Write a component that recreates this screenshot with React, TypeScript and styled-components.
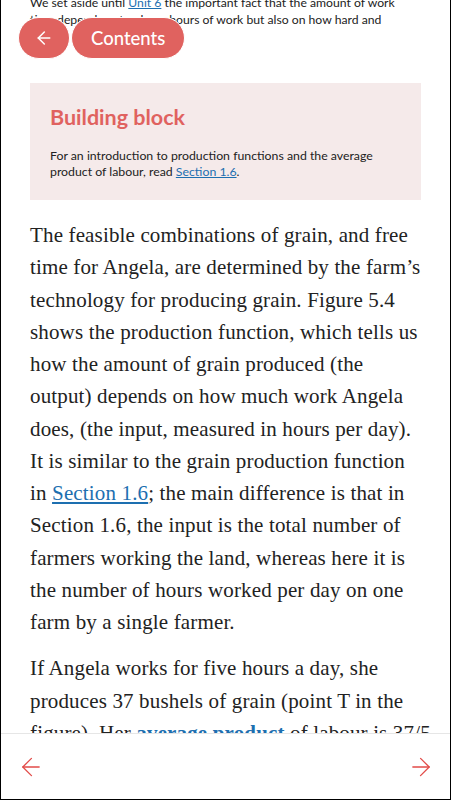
import React from 'react';
import styled, { createGlobalStyle } from 'styled-components';

const red = '#e0625f';
const linkBlue = '#1d6fb0';
const ink = '#222222';

const GlobalStyle = createGlobalStyle`
  html, body {
    margin: 0;
    padding: 0;
    background: #ffffff;
  }
  * {
    box-sizing: border-box;
  }
`;

const Frame = styled.div`
  position: relative;
  width: 451px;
  height: 800px;
  border: 1px solid #000;
  border-top: none;
  display: flex;
  flex-direction: column;
  overflow: hidden;
  background: #fff;
`;

const Scroller = styled.main`
  flex: 1;
  overflow: hidden;
`;

// the page is scrolled a little way down
const Content = styled.div`
  margin-top: -6px;
  padding: 0 29px;
`;

const Line = styled.span`
  display: block;
  white-space: nowrap;
`;

const Intro = styled.p`
  margin: 0 0 55px;
  font-family: Lato, 'Liberation Sans', sans-serif;
  font-size: 12.2px;
  line-height: 17px;
  color: ${ink};
`;

const SansLink = styled.a`
  color: ${linkBlue};
  text-decoration: underline;
`;

const Callout = styled.aside`
  background: #f5eaea;
  padding: 20px 20px 20px;
  margin-bottom: 19px;
`;

const CalloutTitle = styled.h3`
  margin: 0 0 17px;
  font-family: Lato, 'Liberation Sans', sans-serif;
  font-weight: 700;
  font-size: 21.5px;
  line-height: 28px;
  color: ${red};
`;

const CalloutText = styled.p`
  margin: 0;
  font-family: Lato, 'Liberation Sans', sans-serif;
  font-size: 12.3px;
  line-height: 16px;
  color: ${ink};
`;

const Body = styled.p`
  margin: 0 0 14px;
  font-family: 'Liberation Serif', 'DejaVu Serif', serif;
  font-size: 21px;
  letter-spacing: 0.15px;
  line-height: 32.25px;
  color: ${ink};
`;

const SerifLink = styled.a<{ strong?: boolean }>`
  color: ${linkBlue};
  text-decoration: ${props => (props.strong ? 'none' : 'underline')};
  font-weight: ${props => (props.strong ? 700 : 'normal')};
`;

const FloatingNav = styled.nav`
  position: absolute;
  top: 17px;
  left: 17px;
  display: flex;
  gap: 1px;
`;

const PillButton = styled.button<{ round?: boolean }>`
  height: 42px;
  min-width: ${props => (props.round ? '52px' : 'auto')};
  padding: ${props => (props.round ? '0' : '0 19px')};
  border: 1px solid #fff;
  border-radius: 21px;
  background: ${red};
  color: #fff;
  font-family: Lato, 'Liberation Sans', sans-serif;
  font-size: 18.5px;
  font-weight: 500;
  display: flex;
  align-items: center;
  justify-content: center;
  cursor: pointer;
`;

const BottomBar = styled.footer`
  height: 66px;
  flex: none;
  border-top: 1px solid #e6e6e6;
  background: #fff;
  display: flex;
  align-items: center;
  justify-content: space-between;
  padding: 0 19px 0 20px;
`;

const ArrowButton = styled.button`
  border: none;
  background: none;
  padding: 0;
  width: 20px;
  height: 24px;
  display: flex;
  align-items: center;
  justify-content: center;
  cursor: pointer;
`;

const Arrow = ({ dir, color, size, width }: { dir: 'left' | 'right'; color: string; size: number; width: number }) => (
  <svg
    width={size}
    height={size}
    viewBox="0 0 20 22"
    fill="none"
    stroke={color}
    strokeWidth={width}
    strokeLinecap="round"
    strokeLinejoin="round"
    style={{ transform: dir === 'right' ? 'scaleX(-1)' : undefined }}
  >
    <path d="M19 11H1" />
    <path d="M10.5 1.5 1 11l9.5 9.5" />
  </svg>
);

export default function App() {
  return (
    <>
      <GlobalStyle />
      <Frame>
        <Scroller>
          <Content>
            <Intro>
              <Line>
                We set aside until <SansLink href="#">Unit 6</SansLink> the important fact that the amount of work
              </Line>
              <Line>time depends not only on hours of work but also on how hard and</Line>
            </Intro>
            <Callout>
              <CalloutTitle>Building block</CalloutTitle>
              <CalloutText>
                <Line>For an introduction to production functions and the average</Line>
                <Line>
                  product of labour, read <SansLink href="#">Section 1.6</SansLink>.
                </Line>
              </CalloutText>
            </Callout>
            <Body>
              <Line>The feasible combinations of grain, and free</Line>
              <Line>time for Angela, are determined by the farm’s</Line>
              <Line>technology for producing grain. Figure 5.4</Line>
              <Line>shows the production function, which tells us</Line>
              <Line>how the amount of grain produced (the</Line>
              <Line>output) depends on how much work Angela</Line>
              <Line>does, (the input, measured in hours per day).</Line>
              <Line>It is similar to the grain production function</Line>
              <Line>
                in <SerifLink href="#">Section 1.6</SerifLink>; the main difference is that in
              </Line>
              <Line>Section 1.6, the input is the total number of</Line>
              <Line>farmers working the land, whereas here it is</Line>
              <Line>the number of hours worked per day on one</Line>
              <Line>farm by a single farmer.</Line>
            </Body>
            <Body>
              <Line>If Angela works for five hours a day, she</Line>
              <Line>produces 37 bushels of grain (point T in the</Line>
              <Line>
                figure). Her <SerifLink href="#" strong>average product</SerifLink> of labour is 37/5
              </Line>
              <Line>= 7.4 bushels per hour.</Line>
            </Body>
          </Content>
        </Scroller>
        <BottomBar>
          <ArrowButton aria-label="Previous">
            <Arrow dir="left" color="#e24b48" size={20} width={1.4} />
          </ArrowButton>
          <ArrowButton aria-label="Next">
            <Arrow dir="right" color="#e24b48" size={20} width={1.4} />
          </ArrowButton>
        </BottomBar>
        <FloatingNav>
          <PillButton round aria-label="Back">
            <Arrow dir="left" color="#fff" size={14} width={2.4} />
          </PillButton>
          <PillButton>Contents</PillButton>
        </FloatingNav>
      </Frame>
    </>
  );
}
